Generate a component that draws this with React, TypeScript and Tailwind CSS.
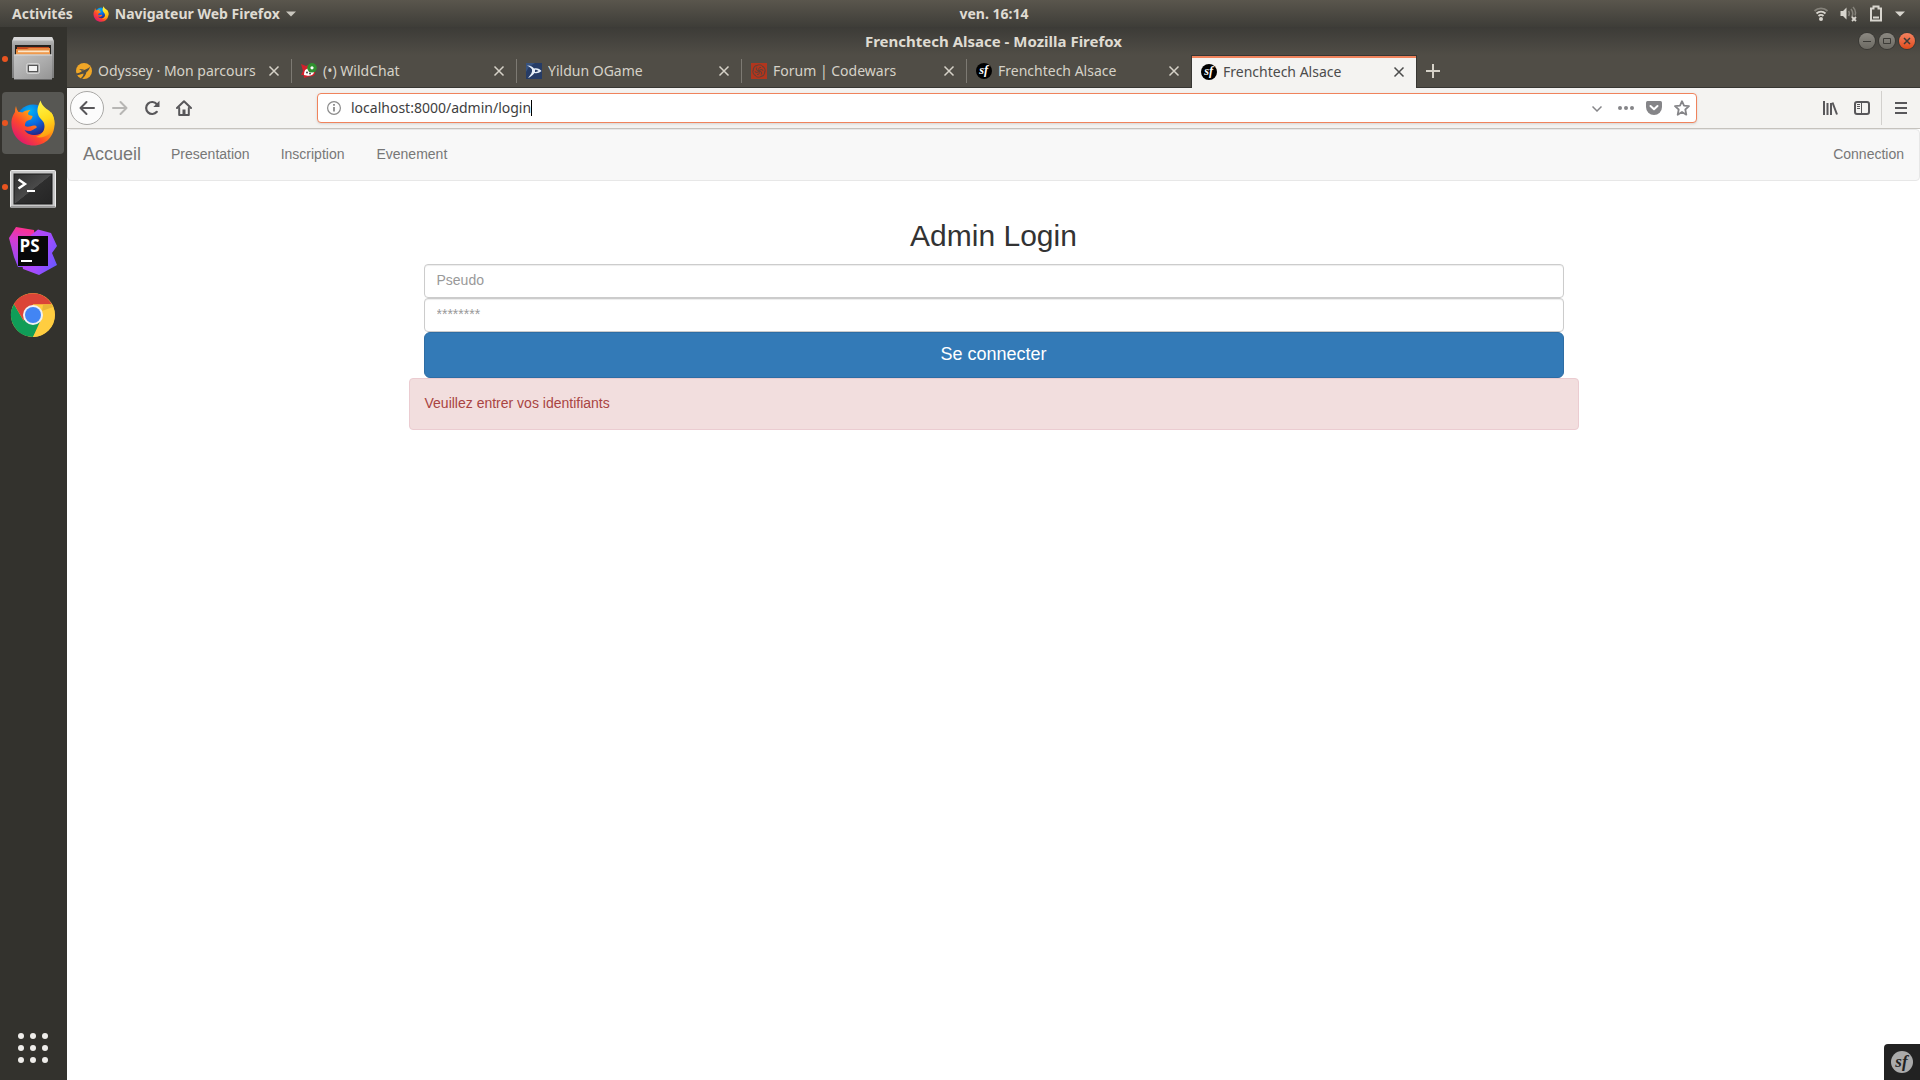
import React from "react";

const UI = "font-['Noto_Sans',sans-serif]";

function FirefoxLogo({ size, id }: { size: number; id: string }) {
  return (
    <svg width={size} height={size} viewBox="0 0 44 46" aria-hidden="true">
      <defs>
        <radialGradient id={id + "b"} cx="0.4" cy="0.2" r="0.8">
          <stop offset="0" stopColor="#00b4f5" />
          <stop offset="0.5" stopColor="#0a6ae0" />
          <stop offset="1" stopColor="#2a1a78" />
        </radialGradient>
        <linearGradient id={id + "f"} x1="0.85" y1="0.1" x2="0.15" y2="0.85">
          <stop offset="0" stopColor="#ffd629" />
          <stop offset="0.35" stopColor="#ff9a12" />
          <stop offset="0.65" stopColor="#ff4a2a" />
          <stop offset="1" stopColor="#e01a6b" />
        </linearGradient>
        <linearGradient id={id + "y"} x1="0.4" y1="0" x2="0.6" y2="1">
          <stop offset="0" stopColor="#fff44a" />
          <stop offset="0.5" stopColor="#ffdc1e" />
          <stop offset="1" stopColor="#ff980e" />
        </linearGradient>
      </defs>
      <circle cx="22" cy="21" r="16.5" fill={"url(#" + id + "b)"} />
      <path
        d="M5 6C4 9 4 11 4 12C1 16 0 21 0.500 25C1.500 37 11 45.500 22.500 45.500C35 45.500 43.500 36 43.500 24C43.500 19 42 15 40 12C40 17 39 19 37 20C36 29 31 35 24 35C19 35 15 33 13.500 30C18 32 21 31 24 28.500C26.500 28 26 26 24 25.500C20 25 18 28 14 26C14 22 15 20.500 20 19.500C21 18 21.500 17 21.500 16C19 15.500 17.500 15 17 14C17 12 18.500 11 19.500 10C15.500 10 13 11 11.500 12.500C9.500 12 8.500 12 7.500 12C6 10 5.500 8.500 5 6Z"
        fill={"url(#" + id + "f)"}
      />
      <path
        d="M29.500 0.500C27.500 5 25.500 9 27 14C28 19 33.500 20 33.500 26C33.500 31 31 35 25 37C33 39 42 34 43.500 24C43.500 18 42 14 38.500 11C34 8 30.500 5 29.500 0.500Z"
        fill={"url(#" + id + "y)"}
      />
    </svg>
  );
}

function FilesIcon() {
  return (
    <svg width="46" height="48" viewBox="0 0 46 48" aria-hidden="true">
      <defs>
        <linearGradient id="cab" x1="0" y1="0" x2="0" y2="1">
          <stop offset="0" stopColor="#c4c4c4" />
          <stop offset="0.2" stopColor="#a2a2a2" />
          <stop offset="1" stopColor="#7d7d7d" />
        </linearGradient>
        <linearGradient id="drawer" x1="0" y1="0" x2="1" y2="1">
          <stop offset="0" stopColor="#c2c2c2" />
          <stop offset="0.5" stopColor="#adadad" />
          <stop offset="1" stopColor="#939393" />
        </linearGradient>
      </defs>
      <path d="M4 2H42L44 6V43H2V6Z" fill="url(#cab)" />
      <path d="M4 2H42L43.500 5.500H2.500Z" fill="#d8d8d8" />
      <rect x="5" y="10" width="36" height="11" fill="#252320" />
      <path d="M7 12H22L24 12H39V20H7Z" fill="#c2491d" />
      <path d="M6 14H17L19 13H40V20H6Z" fill="#e98a3f" />
      <rect x="8" y="15.500" width="31" height="2" fill="#fbe6c8" />
      <rect x="6" y="17.500" width="34" height="3" fill="#ef9a4c" />
      <rect x="4" y="19.500" width="38" height="25.500" rx="1" fill="url(#drawer)" />
      <rect x="4" y="19.500" width="38" height="1" fill="#dcdcdc" />
      <rect x="4" y="44" width="38" height="1" fill="#666" />
      <rect x="16.500" y="28.500" width="13" height="10" rx="2" fill="#a9a9a9" stroke="#d4d4d4" />
      <rect x="18.500" y="30.500" width="9" height="6" fill="#f3f3f3" stroke="#555" />
    </svg>
  );
}

function TerminalIcon() {
  return (
    <svg width="46" height="44" viewBox="0 -4 46 44" aria-hidden="true">
      <defs>
        <linearGradient id="term" x1="0" y1="0" x2="1" y2="1">
          <stop offset="0" stopColor="#303030" />
          <stop offset="0.5" stopColor="#4a4a4a" />
          <stop offset="0.51" stopColor="#2e2e2e" />
          <stop offset="1" stopColor="#252525" />
        </linearGradient>
      </defs>
      <rect x="0.500" y="1.500" width="45" height="37" rx="1" fill="#c9c9c9" stroke="#ececec" />
      <rect x="1" y="37" width="44" height="2" fill="#9a9a9a" />
      <rect x="4" y="5" width="38" height="30" fill="url(#term)" stroke="#1b1b1b" />
      <path d="M8.500 10.500L15 15L8.500 19.500" fill="none" stroke="#fff" strokeWidth="2.400" />
      <rect x="17" y="21" width="8" height="2" fill="#fff" />
    </svg>
  );
}

function PhpStormIcon() {
  return (
    <svg width="48" height="48" viewBox="0 0 48 48" aria-hidden="true">
      <defs>
        <linearGradient id="psa" x1="0.5" y1="0" x2="0.3" y2="1">
          <stop offset="0" stopColor="#ff318c" />
          <stop offset="0.35" stopColor="#d63bd0" />
          <stop offset="1" stopColor="#8a4dff" />
        </linearGradient>
        <linearGradient id="psb" x1="0" y1="0.2" x2="1" y2="0.7">
          <stop offset="0" stopColor="#c444f0" />
          <stop offset="0.6" stopColor="#a44bff" />
          <stop offset="1" stopColor="#6b57ff" />
        </linearGradient>
      </defs>
      <path d="M7 0L25 3L27 20L20 40H9L5 30L0 11Z" fill="url(#psa)" />
      <path d="M29 2.500L42 6L48 19L43 26L48 38L30 48L14 42L12 30L22 8Z" fill="url(#psb)" />
      <rect x="9" y="9" width="30" height="30" fill="#080808" />
      <text x="10.500" y="25" fill="#fff" fontSize="17" fontWeight="700" fontFamily="Open Sans, sans-serif">PS</text>
      <rect x="12" y="33" width="11" height="2" fill="#fff" />
    </svg>
  );
}

function ChromeIcon() {
  return (
    <svg width="46" height="46" viewBox="0 0 46 46" aria-hidden="true">
      <circle cx="23" cy="23" r="22" fill="#ffcd40" />
      <path d="M23 23L32.500 28.500L23 45A22 22 0 0 1 3.900 12L13.500 28.500Z" fill="#109d58" />
      <path d="M3.900 12A22 22 0 0 1 42 12.500H23L13.500 28.500Z" fill="#db4437" />
      <path d="M42 12.500H23V23H33L23 45A22 22 0 0 0 42 12.500Z" fill="#ffcd40" />
      <path d="M33 13L42 12.500L43 15L32 19Z" fill="#e8b637" />
      <circle cx="23" cy="23" r="10" fill="#f1f1f1" />
      <circle cx="23" cy="23" r="8" fill="#4285f4" />
    </svg>
  );
}

function SymfonyIcon({ size, bg, fg }: { size: number; bg: string; fg: string }) {
  return (
    <svg width={size} height={size} viewBox="0 0 22 22" aria-hidden="true">
      <circle cx="11" cy="11" r="11" fill={bg} />
      <text x="10.500" y="15.500" textAnchor="middle" fill={fg} fontSize="17" fontWeight="700" fontStyle="italic" fontFamily="Liberation Serif, serif">sf</text>
    </svg>
  );
}

function OdysseyIcon() {
  return (
    <svg width="16" height="16" viewBox="0 0 16 16" aria-hidden="true">
      <circle cx="8" cy="8" r="8" fill="#f0a626" />
      <path d="M0 10C4 11 5 8 8 7C10 6 12 6 14 3.500C13.500 6.500 12 8 10.500 9C10 12 8 14 6 16L4.500 15.500C7 13.500 7.500 12 7.500 10.500C5 11 2 12.500 0.500 12Z" fill="#504d46" />
      <path d="M3 6L8 6.500L6 8Z" fill="#504d46" />
    </svg>
  );
}

function WildIcon() {
  return (
    <svg width="16" height="16" viewBox="0 0 16 16" aria-hidden="true">
      <path d="M0 1L5 3C8 1 12 2 13 6C16 10 13 14 8 13.500L3 15L2.500 12L0 12L2 8Z" fill="#d3202c" />
      <path d="M3 12C3 7 5 5 9 5.500L13 9.500C12 13 8 13 5.500 12.500Z" fill="#fff" />
      <circle cx="6" cy="9.500" r="0.900" fill="#333" />
      <circle cx="9" cy="10.500" r="0.900" fill="#333" />
      <circle cx="11" cy="4.800" r="4.800" fill="#2f8f2f" />
      <circle cx="11" cy="4.800" r="1.600" fill="#fff" />
    </svg>
  );
}

function OgameIcon() {
  return (
    <svg width="16" height="16" viewBox="0 0 16 16" aria-hidden="true">
      <rect width="16" height="16" fill="#263c66" />
      <path d="M0 0H9L3 4L0 9Z" fill="#38537f" />
      <path d="M1 2.500C5 2.500 7 4 8 5.500C11 4.500 14 6 15.500 8C13 10 11 10.500 8.500 10C6.500 12.500 4.500 14 2 15C5 11.500 6.500 9 6 6.500C5 4.500 3 3.500 1 2.500Z" fill="#e6eef8" />
      <path d="M9 6.800C10.500 6.800 11.500 7.200 12.500 8C11 8.900 10 9 9 9Z" fill="#263c66" />
    </svg>
  );
}

function CodewarsIcon() {
  return (
    <svg width="16" height="16" viewBox="0 0 16 16" aria-hidden="true">
      <rect width="16" height="16" fill="#b1361e" />
      <g fill="none" stroke="#5e4238" strokeWidth="1">
        {[0, 60, 120, 180, 240, 300].map((a) => (
          <path key={a} d="M8 8C7 6 8 4 10 4.500M5.500 2.800C8 1 11 1.800 12 4" transform={"rotate(" + a + " 8 8)"} />
        ))}
      </g>
    </svg>
  );
}

function CloseGlyph() {
  return (
    <svg width="12" height="12" viewBox="0 0 12 12" fill="none" stroke="currentColor" strokeWidth="1.500" aria-hidden="true">
      <path d="M1.500 1.500L10.500 10.500M10.500 1.500L1.500 10.500" />
    </svg>
  );
}

const tabs = [
  { title: "Odyssey · Mon parcours", icon: <OdysseyIcon /> },
  { title: "(•) WildChat", icon: <WildIcon /> },
  { title: "Yildun OGame", icon: <OgameIcon /> },
  { title: "Forum | Codewars", icon: <CodewarsIcon /> },
  { title: "Frenchtech Alsace", icon: <SymfonyIcon size={16} bg="#000" fg="#fff" /> },
];

function TopBar() {
  return (
    <header className="grid h-[27px] grid-cols-[1fr_auto_1fr] items-center bg-linear-to-b from-[#5a564d] to-[#3e3d38] pl-[68px] text-sm font-bold text-[#dfdbd2] [text-shadow:0_-1px_0_#2d2c28]">
      <div className="-ml-[68px] flex items-center pl-3">
        <button type="button">Activités</button>
        <button type="button" className="ml-5 flex items-center gap-1.5">
          <FirefoxLogo size={16} id="fs" />
          <span>Navigateur Web Firefox</span>
          <svg width="10" height="6" viewBox="0 0 10 6" fill="#c9c6be" aria-hidden="true"><path d="M0 0.500H10L5 5.500Z" /></svg>
        </button>
      </div>
      <button type="button">ven. 16:14</button>
      <div className="flex items-center justify-end gap-[11px] pr-[15px]">
        <svg width="16" height="16" viewBox="0 0 16 16" fill="none" strokeWidth="1.800" aria-hidden="true">
          <path d="M1.500 5C5 1.500 11 1.500 14.500 5" stroke="#85827a" />
          <path d="M3.500 7.500C6 5 10 5 12.500 7.500M5.500 10C7 8.500 9 8.500 10.500 10" stroke="#d8d5ce" />
          <circle cx="8" cy="13" r="2" fill="#d8d5ce" />
        </svg>
        <svg width="17" height="16" viewBox="0 0 17 16" aria-hidden="true">
          <path d="M0.500 5H3L6.500 1.500V13.500L3 10H0.500Z" fill="#d8d5ce" />
          <path d="M8.500 5C9.500 6.500 9.500 8.500 8.500 10M11 3C13 5.500 13 9 11.500 11.500M13 1C15.500 3.500 15.800 7 15 9.500" fill="none" stroke="#85827a" strokeWidth="1.600" />
          <path d="M12 11L16 15M16 11L12 15" stroke="#d8d5ce" strokeWidth="1.800" />
        </svg>
        <svg width="16" height="17" viewBox="0 0 16 17" aria-hidden="true">
          <path d="M3 3.500H5.500V1.500H10.500V3.500H13V15.500H3Z" fill="none" stroke="#d8d5ce" strokeWidth="2" />
          <rect x="5" y="11.500" width="6" height="2" fill="#d8d5ce" />
        </svg>
        <svg width="10" height="6" viewBox="0 0 10 6" fill="#d8d5ce" aria-hidden="true"><path d="M0 0.500H10L5 5.500Z" /></svg>
      </div>
    </header>
  );
}

function DockItem({ label, running, active, children }: { label: string; running?: boolean; active?: boolean; children: React.ReactNode }) {
  return (
    <button
      type="button"
      aria-label={label}
      className={"relative flex h-[62px] w-[62px] items-center justify-center rounded " + (active ? "bg-[#575753]" : "")}
    >
      {children}
      {running && <span className="absolute top-7 left-0 size-1.5 rounded-full bg-[#e95420]" />}
    </button>
  );
}

function Dock() {
  return (
    <aside className="flex w-[67px] shrink-0 flex-col items-start gap-0.5 bg-[#33322d] pt-px pl-0.5">
      <DockItem label="Fichiers" running><FilesIcon /></DockItem>
      <DockItem label="Firefox" running active><FirefoxLogo size={46} id="fl" /></DockItem>
      <DockItem label="Terminal" running><TerminalIcon /></DockItem>
      <DockItem label="PhpStorm"><PhpStormIcon /></DockItem>
      <DockItem label="Chrome"><ChromeIcon /></DockItem>
      <button type="button" aria-label="Applications" className="mt-auto mb-px flex size-[62px] items-center justify-center">
        <svg width="30" height="30" viewBox="0 0 30 30" fill="#efedea" aria-hidden="true">
          {[3, 15, 27].map((y) => [3, 15, 27].map((x) => <circle key={x + "-" + y} cx={x} cy={y} r="3" />))}
        </svg>
      </button>
    </aside>
  );
}

function TitleBar() {
  return (
    <div className="grid h-7 grid-cols-[1fr_auto_1fr] items-center bg-linear-to-b from-[#3c3b37] to-[#504d46] text-[15px] font-bold text-[#dfdbd2]">
      <span />
      <h1>Frenchtech Alsace - Mozilla Firefox</h1>
      <div className="flex justify-end gap-1 pr-[5px]">
        <button type="button" aria-label="Réduire" className="flex size-4 items-center justify-center rounded-full bg-linear-to-b from-[#8c8982] to-[#6c6a63] shadow-[0_0_0_1px_#3a3935]">
          <svg width="8" height="8" viewBox="0 0 8 8" stroke="#3c3b37" aria-hidden="true"><path d="M0 4.500H8" /></svg>
        </button>
        <button type="button" aria-label="Agrandir" className="flex size-4 items-center justify-center rounded-full bg-linear-to-b from-[#8c8982] to-[#6c6a63] shadow-[0_0_0_1px_#3a3935]">
          <svg width="8" height="8" viewBox="0 0 8 8" fill="none" stroke="#3c3b37" aria-hidden="true"><path d="M0.500 1.500H7.500V6.500H0.500Z" /></svg>
        </button>
        <button type="button" aria-label="Fermer" className="flex size-4 items-center justify-center rounded-full bg-linear-to-b from-[#f5825f] to-[#df4a16] shadow-[0_0_0_1px_#3a3935]">
          <svg width="8" height="8" viewBox="0 0 8 8" stroke="#3c3b37" strokeWidth="1.500" aria-hidden="true"><path d="M1 1L7 7M7 1L1 7" /></svg>
        </button>
      </div>
    </div>
  );
}

function TabStrip() {
  return (
    <div className="flex h-[33px] bg-[#504d46] text-sm text-[#d6d2c8]">
      {tabs.map((tab, i) => (
        <div key={tab.title + i} className={"flex shrink basis-[225px] items-center border-b border-[#373632] pr-[11px] " + (i === 0 ? "max-w-[224px] pl-[9px]" : "pl-0")}>
          {i > 0 && <span className="mr-[9px] h-6 w-px bg-[#7d7a73]" />}
          {tab.icon}
          <span className="ml-1.5 grow truncate">{tab.title}</span>
          <button type="button" aria-label="Fermer l'onglet"><CloseGlyph /></button>
        </div>
      ))}
      <div className="flex shrink basis-[226px] items-center border-x border-t border-[#373632] bg-[#f4f3f1] text-[#4c4c4c] shadow-[inset_0_2px_0_#f0835c]">
        <div className="flex grow items-center pr-[11px] pl-[9px]">
          <SymfonyIcon size={16} bg="#000" fg="#fff" />
          <span className="ml-1.5 grow truncate">Frenchtech Alsace</span>
          <button type="button" aria-label="Fermer l'onglet"><CloseGlyph /></button>
        </div>
      </div>
      <button type="button" aria-label="Nouvel onglet" className="flex grow items-center border-b border-[#373632] pl-[9px]">
        <svg width="14" height="14" viewBox="0 0 14 14" stroke="#d6d2c8" strokeWidth="2" aria-hidden="true"><path d="M0 7H14M7 0V14" /></svg>
      </button>
    </div>
  );
}

function Toolbar() {
  return (
    <div className="flex h-[41px] items-center border-b border-[#c5c2bd] bg-[#f4f3f1] pr-3 pl-[3px] text-[#58575a]">
      <button type="button" aria-label="Précédent" className="flex size-[34px] items-center justify-center rounded-full border border-[#a9a8a6] bg-[#fcfcfc]">
        <svg width="16" height="16" viewBox="0 0 16 16" fill="none" stroke="currentColor" strokeWidth="2" strokeLinecap="round" strokeLinejoin="round" aria-hidden="true"><path d="M15 8H1.500M7.500 2L1.500 8L7.500 14" /></svg>
      </button>
      <button type="button" aria-label="Suivant" className="ml-2 flex size-4 text-[#b7b6b4]">
        <svg width="16" height="16" viewBox="0 0 16 16" fill="none" stroke="currentColor" strokeWidth="2" strokeLinecap="round" strokeLinejoin="round" aria-hidden="true"><path d="M1 8H14.500M8.500 2L14.500 8L8.500 14" /></svg>
      </button>
      <button type="button" aria-label="Actualiser" className="ml-4 flex size-4">
        <svg width="16" height="16" viewBox="0 0 16 16" aria-hidden="true">
          <path d="M12.800 4.200A6 6 0 1 0 12.800 11.800" fill="none" stroke="currentColor" strokeWidth="2.200" strokeLinecap="round" />
          <path d="M15.500 0.800V7H9.300Z" fill="currentColor" />
        </svg>
      </button>
      <button type="button" aria-label="Accueil" className="ml-4 flex size-4">
        <svg width="16" height="16" viewBox="0 0 16 16" fill="none" stroke="currentColor" strokeWidth="2" strokeLinecap="round" strokeLinejoin="round" aria-hidden="true">
          <path d="M1 8L8 1.200L15 8" />
          <path d="M3.200 8V15H12.800V8" />
          <path d="M8 9.500V14" strokeWidth="3" strokeLinecap="butt" />
        </svg>
      </button>
      <div className="mr-[117px] ml-[125px] flex h-[30px] grow items-center rounded border border-[#f0835c] bg-white pr-1.5 pl-[9px] shadow-sm">
        <svg width="14" height="14" viewBox="0 0 14 14" fill="none" stroke="#8b8b8b" aria-hidden="true">
          <circle cx="7" cy="7" r="6.400" strokeWidth="1.200" />
          <path d="M7 6V10.500M7 3V4.800" strokeWidth="1.800" />
        </svg>
        <input type="text" aria-label="Adresse" defaultValue="localhost:8000/admin/login" className="ml-2.5 field-sizing-content text-sm text-[#3e3e3e] outline-none" />
        <span className="mr-auto h-4 w-px bg-black" />
        <div className="flex items-center gap-3 text-[#858588]">
          <button type="button" aria-label="Historique" className="mr-1">
            <svg width="10" height="10" viewBox="0 0 10 10" fill="none" stroke="currentColor" strokeWidth="1.500" aria-hidden="true"><path d="M0.500 3.500L5 8L9.500 3.500" /></svg>
          </button>
          <button type="button" aria-label="Actions">
            <svg width="16" height="16" viewBox="0 0 16 16" fill="currentColor" aria-hidden="true"><circle cx="2" cy="8" r="2" /><circle cx="8" cy="8" r="2" /><circle cx="14" cy="8" r="2" /></svg>
          </button>
          <button type="button" aria-label="Pocket">
            <svg width="16" height="16" viewBox="0 0 16 16" aria-hidden="true">
              <path d="M1.500 1H14.500Q16 1 16 2.500V7A8 8 0 0 1 0 7V2.500Q0 1 1.500 1Z" fill="currentColor" />
              <path d="M4.500 6L8 9.300L11.500 6" fill="none" stroke="#fff" strokeWidth="2" strokeLinecap="round" strokeLinejoin="round" />
            </svg>
          </button>
          <button type="button" aria-label="Marque-page">
            <svg width="16" height="16" viewBox="0 0 16 16" fill="none" stroke="currentColor" strokeWidth="1.800" strokeLinejoin="round" aria-hidden="true"><path d="M8 1.200L10 5.700L15 6.200L11.300 9.500L12.300 14.700L8 12L3.700 14.700L4.700 9.500L1 6.200L6 5.700Z" /></svg>
          </button>
        </div>
      </div>
      <button type="button" aria-label="Bibliothèque" className="ml-2">
        <svg width="16" height="16" viewBox="0 0 16 16" fill="none" stroke="currentColor" strokeWidth="2" aria-hidden="true"><path d="M2 1V15M5.500 3V15M9 3V15M10.500 2.500L15 14.500" /></svg>
      </button>
      <button type="button" aria-label="Panneaux latéraux" className="ml-4">
        <svg width="16" height="16" viewBox="0 0 16 16" fill="none" stroke="currentColor" aria-hidden="true">
          <rect x="1" y="2" width="14" height="12" rx="2" strokeWidth="2" />
          <path d="M7.500 2V14M3 4.500H6M3 6.500H6M3 8.500H6" />
        </svg>
      </button>
      <span className="ml-[11px] h-[34px] w-px bg-[#d2d0cd]" />
      <button type="button" aria-label="Menu" className="ml-3">
        <svg width="14" height="16" viewBox="0 0 14 16" stroke="currentColor" strokeWidth="2" aria-hidden="true"><path d="M1 3H13M1 8H13M1 13H13" /></svg>
      </button>
    </div>
  );
}

function Page() {
  return (
    <main className="relative flex-1 bg-white font-['Liberation_Sans',Arial,sans-serif] text-sm text-[#333]">
      <nav className="flex h-[52px] items-center rounded border border-[#e7e7e7] bg-[#f8f8f8] pb-0.5 text-[#777]">
        <a href="#accueil" className="px-[15px] text-lg">Accueil</a>
        <a href="#presentation" className="px-[15px]">Presentation</a>
        <a href="#inscription" className="px-4">Inscription</a>
        <a href="#evenement" className="px-4">Evenement</a>
        <a href="#connection" className="ml-auto px-[15px]">Connection</a>
      </nav>
      <div className="mx-auto mt-[38px] max-w-[1170px]">
        <form className="flex flex-col px-[15px]" onSubmit={(e) => e.preventDefault()}>
          <h2 className="mb-3 text-center text-3xl leading-[33px] font-medium">Admin Login</h2>
          <input type="text" aria-label="Pseudo" placeholder="Pseudo" className="h-[34px] rounded border border-[#ccc] px-3 pb-0.5 shadow-[inset_0_1px_1px_rgba(0,0,0,0.075)] placeholder:text-[#999]" />
          <input type="password" aria-label="Mot de passe" placeholder="********" className="h-[34px] rounded border border-[#ccc] px-3 pb-0.5 shadow-[inset_0_1px_1px_rgba(0,0,0,0.075)] placeholder:text-[#999]" />
          <button type="submit" className="h-[46px] rounded-md border border-[#2e6da4] bg-[#337ab7] pb-0.5 text-lg text-white">Se connecter</button>
        </form>
        <div role="alert" className="rounded border border-[#ebccd1] bg-[#f2dede] px-[15px] pt-3.5 pb-4 leading-5 text-[#a94442]">Veuillez entrer vos identifiants</div>
      </div>
      <button type="button" aria-label="Symfony" className="absolute right-0 bottom-0 flex size-9 items-center justify-center rounded-tl bg-[#222]">
        <SymfonyIcon size={22} bg="#aaa" fg="#222" />
      </button>
    </main>
  );
}

export default function App() {
  return (
    <div className={"flex min-h-screen flex-col " + UI}>
      <TopBar />
      <div className="flex flex-1">
        <Dock />
        <div className="flex min-w-0 flex-1 flex-col">
          <TitleBar />
          <TabStrip />
          <Toolbar />
          <Page />
        </div>
      </div>
    </div>
  );
}
